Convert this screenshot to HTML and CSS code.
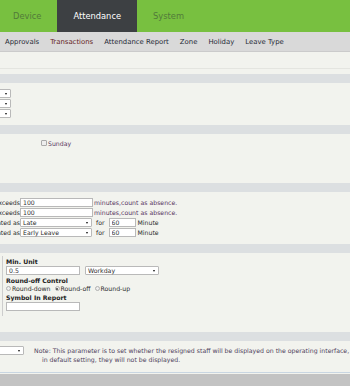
FILE: index.html
```html
<!DOCTYPE html>
<html lang="en">
<head>
  <meta charset="UTF-8">
  <meta name="viewport" content="width=device-width, initial-scale=1">
  <title>Attendance Rule</title>
  <link rel="stylesheet" href="styles.css">
</head>
<body>
  <header class="topnav">
    <a class="tab first">Device</a>
    <a class="tab active">Attendance</a>
    <a class="tab">System</a>
  </header>
  <nav class="subnav">
    <a>Approvals</a>
    <a class="current">Transactions</a>
    <a>Attendance Report</a>
    <a>Zone</a>
    <a>Holiday</a>
    <a>Leave Type</a>
  </nav>

  <div class="content">
    <div class="intro"></div>

    <div class="band"></div>
    <div class="section s1">
      <div class="row"><span class="select cut-sm"><span class="arrow"></span></span></div>
      <div class="row"><span class="select cut-sm"><span class="arrow"></span></span></div>
      <div class="row"><span class="select cut-sm"><span class="arrow"></span></span></div>
    </div>

    <div class="band"></div>
    <div class="section s2">
      <div class="days">
        <label class="check"><span class="box"></span><span class="purple">Sunday</span></label>
      </div>
    </div>

    <div class="band"></div>
    <div class="section s3">
      <div class="row">
        <span class="label">If come late exceeds</span>
        <input class="field wide" value="100">
        <span class="purple after">minutes,count as absence.</span>
      </div>
      <div class="row">
        <span class="label">If leave early exceeds</span>
        <input class="field wide" value="100">
        <span class="purple after">minutes,count as absence.</span>
      </div>
      <div class="row">
        <span class="label">Late counted as</span>
        <span class="select wide-sel">Late<span class="arrow"></span></span>
        <span class="for">for</span>
        <input class="field short" value="60">
        <span class="unit">Minute</span>
      </div>
      <div class="row">
        <span class="label">Early leave counted as</span>
        <span class="select wide-sel">Early Leave<span class="arrow"></span></span>
        <span class="for">for</span>
        <input class="field short" value="60">
        <span class="unit">Minute</span>
      </div>
    </div>

    <div class="band"></div>
    <div class="section s4">
      <div class="group">
        <div class="caption">Min. Unit</div>
        <div class="row">
          <input class="field mid" value="0.5">
          <span class="select mid-sel">Workday<span class="arrow"></span></span>
        </div>
        <div class="caption">Round-off Control</div>
        <div class="radios">
          <label class="radio"><span class="dot"></span>Round-down</label>
          <label class="radio"><span class="dot on"></span>Round-off</label>
          <label class="radio"><span class="dot"></span>Round-up</label>
        </div>
        <div class="caption">Symbol In Report</div>
        <div class="row">
          <input class="field mid" value="">
        </div>
      </div>
    </div>

    <div class="band"></div>
    <div class="section s5">
      <span class="select cut-md"><span class="arrow"></span></span>
      <div class="note">Note: This parameter is to set whether the resigned staff will be displayed on the operating interface,<br>in default setting, they will not be displayed.</div>
    </div>
  </div>
  <div class="footer-bar"></div>
</body>
</html>
```

FILE: styles.css
```css
body {
  margin: 0;
  padding: 0;
  background: #f2f3ee;
  color: #2b2b2b;
  font-family: "DejaVu Sans", Verdana, sans-serif;
  font-size: 6.2px;
  overflow: hidden;
}
a {
  text-decoration: none;
  cursor: pointer;
}
.topnav {
  display: flex;
  height: 32px;
  background: #78c040;
}
.topnav .tab {
  display: flex;
  align-items: center;
  padding: 0 16px;
  font-size: 8.3px;
  color: #527a3a;
}
.topnav .tab.first {
  margin-left: -3px;
}
.topnav .tab.active {
  background: #3d4043;
  color: #fff;
}
.subnav {
  display: flex;
  align-items: center;
  gap: 11px;
  height: 19px;
  padding-left: 5px;
  background: #d9d9d9;
  border-bottom: 1px solid #cbcbcb;
  font-size: 6.9px;
}
.subnav a {
  color: #262a36;
}
.subnav a.current {
  color: #652424;
}
.intro {
  height: 16px;
  border-bottom: 1px solid #e4e5e0;
}
.band {
  height: 9px;
  background: #dcdfe1;
}
.intro + .band {
  margin-top: 5px;
}
.section {
  box-sizing: border-box;
}
.row {
  display: flex;
  align-items: center;
  height: 10px;
  white-space: nowrap;
}
.s1 {
  padding: 5px 0 7px;
}
.s2 {
  height: 49px;
  padding-top: 4px;
}
.s3 {
  height: 52px;
  padding-top: 5px;
}
.s4 {
  height: 79px;
  padding-top: 3px;
}
.s5 {
  height: 32px;
  padding-top: 5px;
  display: flex;
  align-items: flex-start;
  border-bottom: 1px solid #c9d6e2;
}
.select {
  position: relative;
  display: inline-block;
  box-sizing: border-box;
  height: 9px;
  line-height: 7px;
  padding-left: 2px;
  background: #fff;
  border: 1px solid #b9b9b9;
  border-radius: 1px;
  white-space: nowrap;
}
.select .arrow {
  position: absolute;
  right: 3px;
  top: 3px;
  border-left: 1.5px solid transparent;
  border-right: 1.5px solid transparent;
  border-top: 2px solid #111;
}
.cut-sm {
  width: 51px;
  margin-left: -40px;
}
.cut-md {
  width: 54px;
  margin-left: -30px;
  flex-shrink: 0;
}
.field {
  box-sizing: border-box;
  height: 9px;
  padding: 0 2px;
  margin: 0;
  font: inherit;
  color: #333;
  background: #fff;
  border: 1px solid #b9b9b9;
  outline: none;
}
.days {
  display: flex;
  height: 10px;
  align-items: center;
  padding-left: 41px;
}
.check {
  display: flex;
  align-items: center;
}
.check .box {
  box-sizing: border-box;
  width: 6px;
  height: 6px;
  margin-right: 1px;
  background: #eee;
  border: 1px solid #aaa;
  border-radius: 1px;
}
.purple {
  color: #57365f;
}
.label {
  display: flex;
  justify-content: flex-end;
  width: 20px;
  flex-shrink: 0;
}
.wide {
  width: 73px;
}
.after {
  margin-left: 1px;
}
.wide-sel {
  width: 72px;
}
.for {
  margin-left: 4px;
}
.short {
  width: 27px;
  margin-left: 4px;
}
.unit {
  margin-left: 2px;
}
.group {
  margin-left: 2px;
  padding: 2px 0 5px 3px;
  border-left: 1px solid #cdcdcd;
}
.caption {
  height: 8px;
  line-height: 8px;
  font-weight: bold;
  color: #222;
}
.group .row {
  height: 9px;
}
.group .caption + .row + .caption,
.radios + .caption {
  margin-top: 2px;
}
.mid {
  width: 74px;
}
.mid-sel {
  width: 74px;
  margin-left: 5px;
}
.radios {
  display: flex;
  align-items: center;
  gap: 4px;
  height: 7px;
}
.radio {
  display: flex;
  align-items: center;
}
.radio .dot {
  position: relative;
  box-sizing: border-box;
  width: 5px;
  height: 5px;
  margin-right: 1px;
  border: 1px solid #b0b0b0;
  border-radius: 50%;
  background: #eee;
}
.radio .dot.on::after {
  content: "";
  position: absolute;
  left: 0.5px;
  top: 0.5px;
  width: 2px;
  height: 2px;
  border-radius: 50%;
  background: #444;
}
.note {
  margin-left: 10px;
  padding-left: 8px;
  text-indent: -8px;
  line-height: 9px;
  white-space: nowrap;
  color: #4e3f5c;
}
.footer-bar {
  margin-top: 1px;
  height: 20px;
  background: #c3c3c3;
}
```
